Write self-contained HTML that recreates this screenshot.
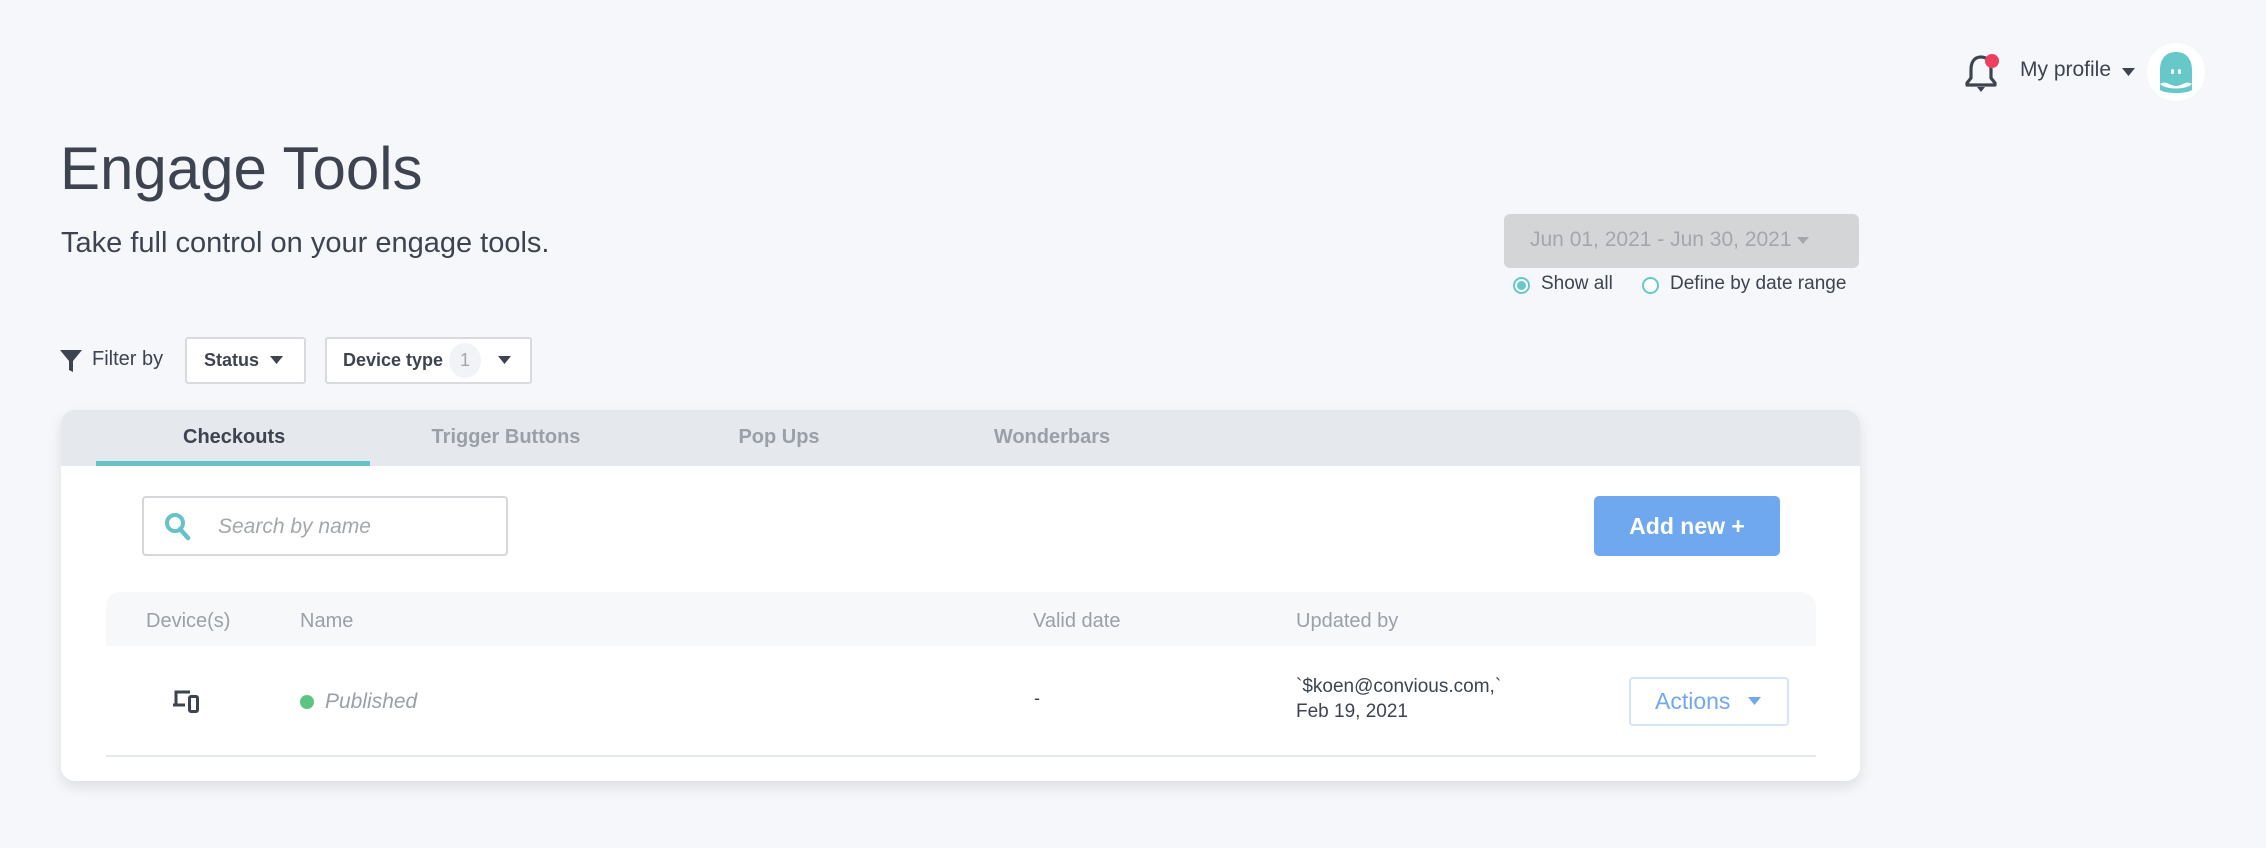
<!DOCTYPE html>
<html><head><meta charset="utf-8"><style>
*{box-sizing:border-box;margin:0;padding:0}
body{width:2266px;height:848px;background:#f5f7fa;font-family:"Liberation Sans",sans-serif;position:relative;overflow:hidden;color:#3d4450}
.a{position:absolute;white-space:nowrap}
</style></head><body>
<svg class="a" style="left:1962px;top:52px" width="40" height="42" viewBox="0 0 40 42">
<path d="M19 5 C11 5 9 12 9 18 L9 26 L5 31 L5 33 L33 33 L33 31 L29 26 L29 18 C29 12 27 5 19 5 Z" fill="none" stroke="#3d4450" stroke-width="3.2" stroke-linejoin="round"/>
<path d="M15 35 L23 35 L19 40 Z" fill="#3d4450"/>
<circle cx="30" cy="9" r="7" fill="#ed3f5f"/>
</svg>
<div class="a" style="left:2020px;top:58px;font-size:21px;color:#3d4450">My profile</div>
<svg class="a" style="left:2122px;top:68px" width="13" height="8"><path d="M0 0H13L6.5 8Z" fill="#3d4450"/></svg>
<div class="a" style="left:2147px;top:43px;width:58px;height:58px;border-radius:50%;background:#fff"></div>
<svg class="a" style="left:2156px;top:50px" width="40" height="44" viewBox="0 0 40 44">
<path d="M20 2 C9 2 4 10 4 20 L4 34 C10 30 14 36 20 36 C26 36 30 30 36 34 L36 20 C36 10 31 2 20 2 Z" fill="#66c8c8"/>
<path d="M4 34 C10 40 30 40 36 34 L36 40 C30 44 10 44 4 40Z" fill="#66c8c8"/>
<rect x="15" y="19" width="3" height="5" rx="1.5" fill="#fff"/><rect x="22" y="19" width="3" height="5" rx="1.5" fill="#fff"/>
</svg>
<div class="a" style="left:60px;top:134px;font-size:60px;line-height:70px;color:#3d4450">Engage Tools</div>
<div class="a" style="left:61px;top:225px;font-size:29px;line-height:36px;color:#3d4450">Take full control on your engage tools.</div>
<div class="a" style="left:1504px;top:214px;width:355px;height:54px;background:#d4d5d7;border-radius:6px"></div>
<div class="a" style="left:1530px;top:228px;font-size:21px;color:#a3a7ad">Jun 01, 2021 - Jun 30, 2021</div>
<svg class="a" style="left:1797px;top:237px" width="12" height="7"><path d="M0 0H12L6 7Z" fill="#a3a7ad"/></svg>
<div class="a" style="left:1513px;top:277px;width:17px;height:17px;border-radius:50%;border:2px solid #66c8c8;background:#fff"><div style="margin:2px;width:9px;height:9px;border-radius:50%;background:#66c8c8"></div></div>
<div class="a" style="left:1541px;top:273px;font-size:19px;color:#3d4450">Show all</div>
<div class="a" style="left:1642px;top:277px;width:17px;height:17px;border-radius:50%;border:2px solid #66c8c8;background:#fff"></div>
<div class="a" style="left:1670px;top:273px;font-size:19px;color:#3d4450">Define by date range</div>
<svg class="a" style="left:60px;top:350px" width="22" height="22" viewBox="0 0 22 22"><path d="M0 0H22L13 11V22L9 20V11Z" fill="#3d4450"/></svg>
<div class="a" style="left:92px;top:348px;font-size:20px;color:#3d4450">Filter by</div>
<div class="a" style="left:185px;top:337px;width:121px;height:47px;background:#fff;border:2px solid #d8dade;border-radius:3px"></div>
<div class="a" style="left:204px;top:350px;font-size:18px;font-weight:bold;color:#3d4450">Status</div>
<svg class="a" style="left:270px;top:356px" width="13" height="8"><path d="M0 0H13L6.5 8Z" fill="#3d4450"/></svg>
<div class="a" style="left:325px;top:337px;width:207px;height:47px;background:#fff;border:2px solid #d8dade;border-radius:3px"></div>
<div class="a" style="left:343px;top:350px;font-size:18px;font-weight:bold;color:#3d4450">Device type</div>
<div class="a" style="left:449px;top:343px;width:32px;height:35px;border-radius:50%;background:#f1f3f6;text-align:center;font-size:18px;line-height:35px;color:#a3a7ad">1</div>
<svg class="a" style="left:498px;top:356px" width="13" height="8"><path d="M0 0H13L6.5 8Z" fill="#3d4450"/></svg>
<div class="a" style="left:61px;top:410px;width:1799px;height:371px;background:#fff;border-radius:14px;box-shadow:0 6px 14px rgba(0,0,0,0.1);overflow:hidden">
<div style="height:56px;background:#e5e8ec"></div>
</div>
<div class="a" style="left:96px;top:461px;width:274px;height:5px;background:#66c2c8"></div>
<div class="a" style="left:183px;top:426px;width:100px;text-align:center;font-size:20px;font-weight:bold;color:#3d4450">Checkouts</div>
<div class="a" style="left:406px;top:426px;width:200px;text-align:center;font-size:20px;font-weight:bold;color:#9aa0a8">Trigger Buttons</div>
<div class="a" style="left:679px;top:426px;width:200px;text-align:center;font-size:20px;font-weight:bold;color:#9aa0a8">Pop Ups</div>
<div class="a" style="left:952px;top:426px;width:200px;text-align:center;font-size:20px;font-weight:bold;color:#9aa0a8">Wonderbars</div>
<div class="a" style="left:142px;top:496px;width:366px;height:60px;border:2px solid #d5d7db;border-radius:4px;background:#fff"></div>
<svg class="a" style="left:164px;top:512px" width="28" height="30" viewBox="0 0 28 30"><circle cx="11" cy="11" r="8" fill="none" stroke="#66c2c8" stroke-width="4"/><path d="M16 17L24 26" stroke="#66c2c8" stroke-width="4.5" stroke-linecap="round"/></svg>
<div class="a" style="left:218px;top:515px;font-size:21px;font-style:italic;color:#a3a7ad">Search by name</div>
<div class="a" style="left:1594px;top:496px;width:186px;height:60px;background:#6fa8ef;border-radius:5px;color:#fff;font-size:23px;font-weight:bold;text-align:center;line-height:60px">Add new +</div>
<div class="a" style="left:106px;top:592px;width:1710px;height:54px;background:#f7f8fa;border-radius:14px 14px 0 0"></div>
<div class="a" style="left:146px;top:610px;font-size:20px;color:#9aa0a8">Device(s)</div>
<div class="a" style="left:300px;top:610px;font-size:20px;color:#9aa0a8">Name</div>
<div class="a" style="left:1033px;top:610px;font-size:20px;color:#9aa0a8">Valid date</div>
<div class="a" style="left:1296px;top:610px;font-size:20px;color:#9aa0a8">Updated by</div>
<svg class="a" style="left:173px;top:689px" width="28" height="25" viewBox="0 0 28 25"><path d="M3 15V3H17" fill="none" stroke="#3d4450" stroke-width="3"/><path d="M0 16H12" stroke="#3d4450" stroke-width="3"/><rect x="16.5" y="7.5" width="8" height="15" rx="1.5" fill="none" stroke="#3d4450" stroke-width="3"/></svg>
<div class="a" style="left:300px;top:695px;width:14px;height:14px;border-radius:50%;background:#5cc584"></div>
<div class="a" style="left:325px;top:690px;font-size:21px;font-style:italic;color:#9aa0a8">Published</div>
<div class="a" style="left:1034px;top:688px;font-size:18px;color:#3d4450">-</div>
<div class="a" style="left:1296px;top:676px;font-size:19px;color:#3d4450">`$koen@convious.com,`</div>
<div class="a" style="left:1296px;top:701px;font-size:19px;color:#3d4450">Feb 19, 2021</div>
<div class="a" style="left:1629px;top:677px;width:160px;height:49px;border:2px solid #d4e5fb;border-radius:4px;background:#fff"></div>
<div class="a" style="left:1655px;top:688px;font-size:23px;color:#6fa8ef">Actions</div>
<svg class="a" style="left:1748px;top:697px" width="13" height="8"><path d="M0 0H13L6.5 8Z" fill="#6fa8ef"/></svg>
<div class="a" style="left:106px;top:755px;width:1710px;height:2px;background:#e5e8ec"></div>
</body></html>
